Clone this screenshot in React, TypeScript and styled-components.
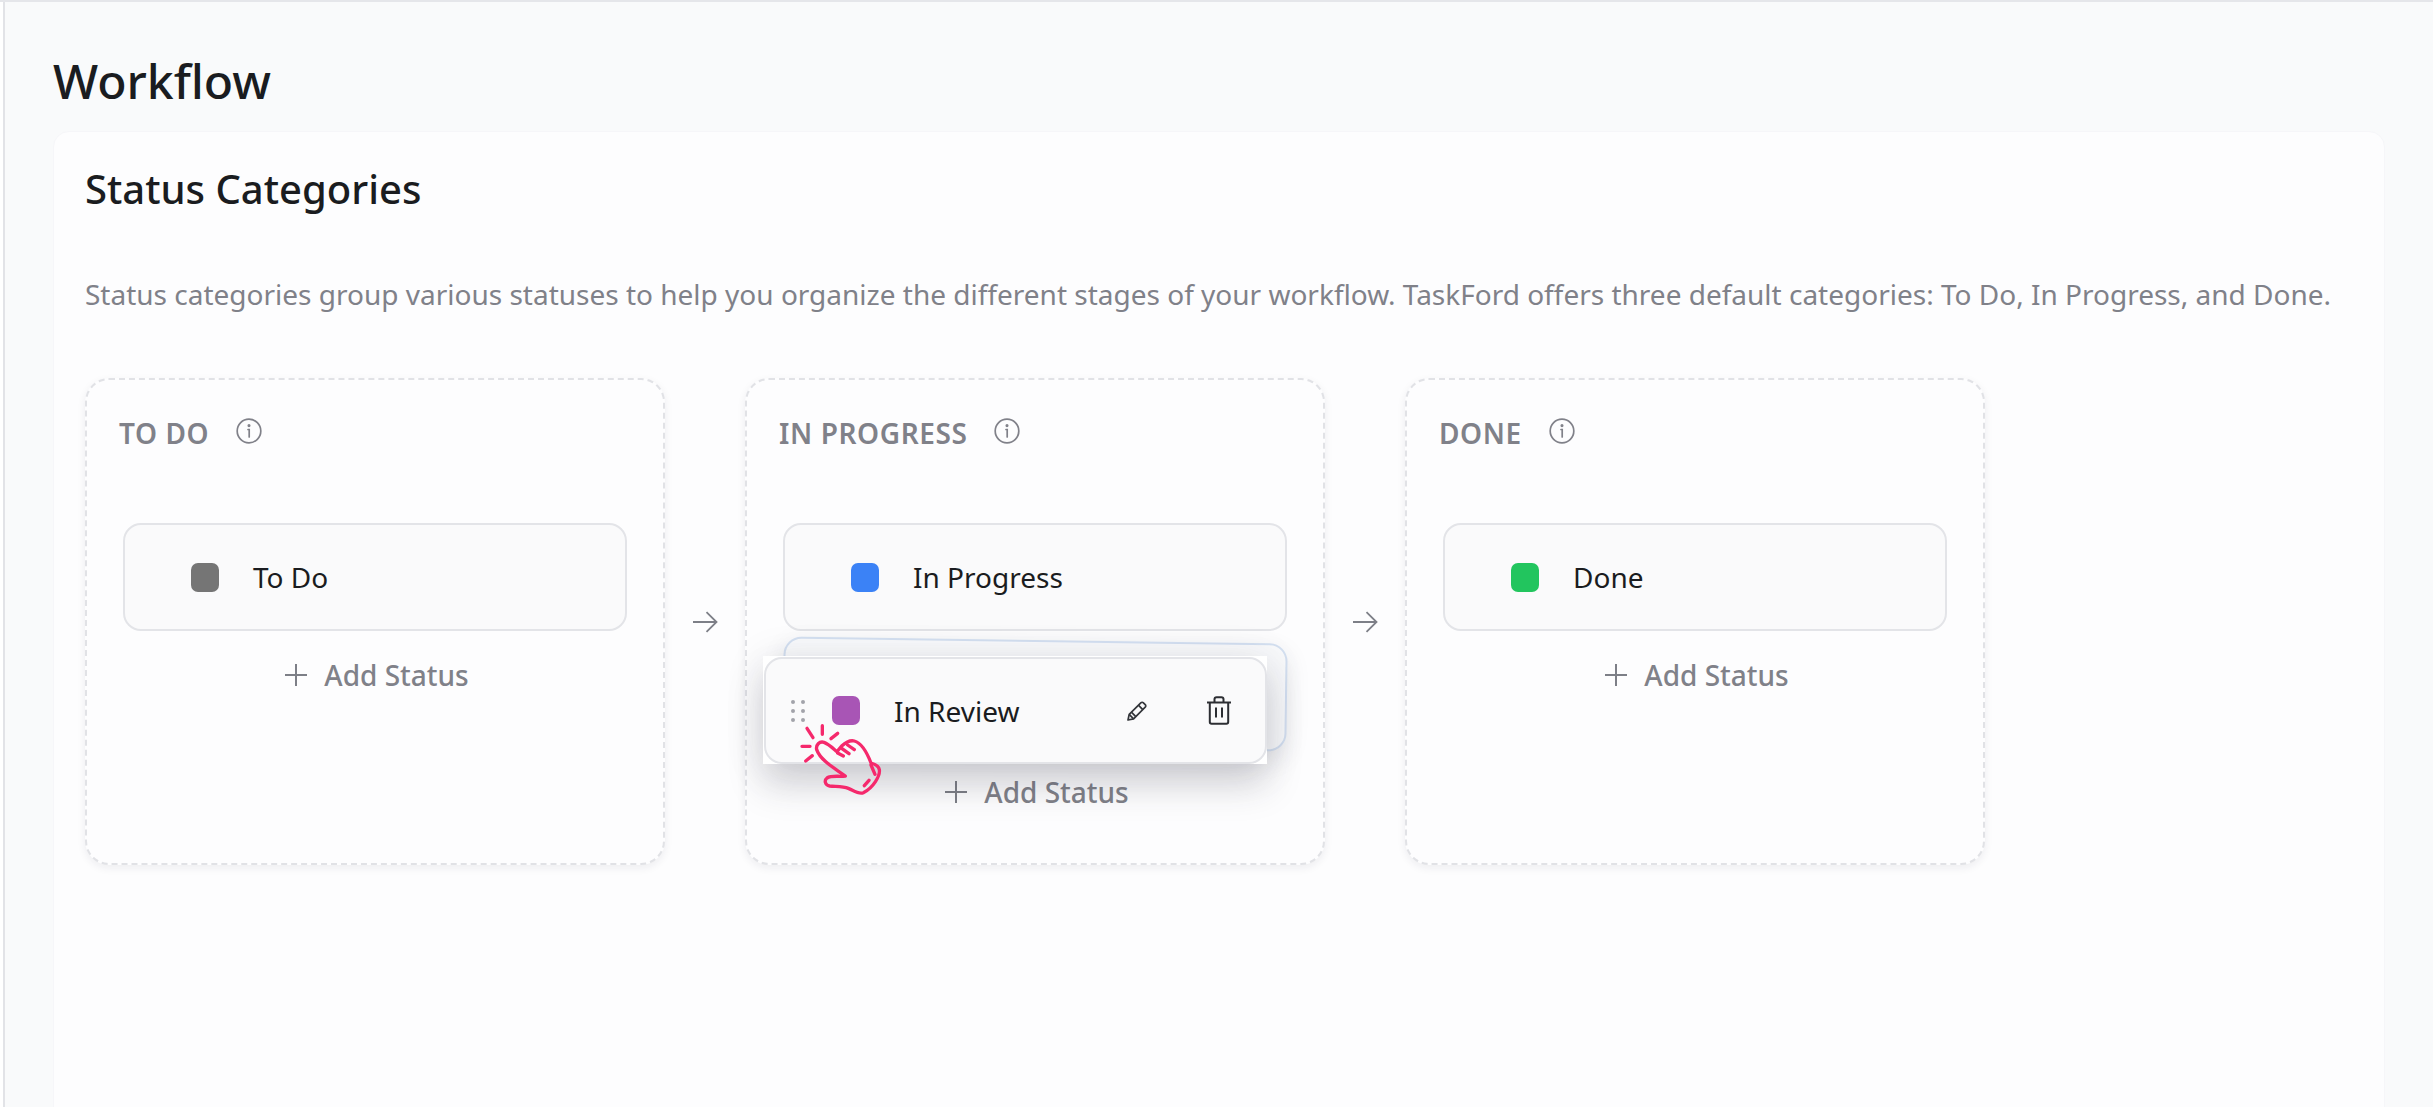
import React from "react";
import styled, { createGlobalStyle } from "styled-components";

const Global = createGlobalStyle`
  html, body { margin: 0; padding: 0; background: #ffffff; }
  body { font-family: "Noto Sans", "Open Sans", sans-serif; overflow: hidden; }
`;

const Page = styled.div`
  box-sizing: border-box;
  width: 2433px;
  height: 1107px;
  overflow: hidden;
  border-top: 2px solid #e5e6ea;
  padding-left: 3px;
`;

const Main = styled.main`
  box-sizing: border-box;
  height: 100%;
  border-left: 2px solid #e2e3e7;
  background: #f9fafb;
  padding: 47px 48px 0 48px;
`;

const Title = styled.h1`
  margin: 0 0 18px;
  font-size: 48px;
  line-height: 64px;
  font-weight: 500;
  color: #1a1c20;
`;

const Card = styled.section`
  box-sizing: border-box;
  height: 1000px;
  background: #fdfdfe;
  border: 1px solid #f6f6f9;
  border-radius: 16px;
  padding: 32px 31px 0;
`;

const CardTitle = styled.h2`
  margin: 0 0 60px;
  font-size: 40px;
  line-height: 50px;
  font-weight: 500;
  color: #1a1c20;
`;

const Description = styled.p`
  margin: 0 0 64px;
  font-size: 28px;
  line-height: 40px;
  color: #808189;
  white-space: nowrap;
`;

const Board = styled.div`
  display: flex;
  align-items: flex-start;
`;

const Column = styled.div`
  position: relative;
  box-sizing: border-box;
  flex: none;
  width: 580px;
  height: 487px;
  border: 2px dashed #e1e2e6;
  border-radius: 24px;
  background: #fdfdfe;
  box-shadow: 0 3px 8px rgba(30, 30, 50, 0.07);
  padding-top: 34px;
`;

const ColumnHead = styled.div`
  display: flex;
  align-items: center;
  gap: 27px;
  padding: 0 32px;
  height: 38px;
  margin-bottom: 71px;
`;

const ColumnName = styled.span`
  font-size: 28px;
  line-height: 38px;
  font-weight: 600;
  letter-spacing: 0.6px;
  color: #808189;
`;

const InfoIcon = styled.svg`
  flex: none;
  width: 26px;
  height: 26px;
  margin-bottom: 5px;
  color: #808189;
`;

const RowList = styled.div`
  display: flex;
  flex-direction: column;
  gap: 9px;
  padding: 0 36px;
`;

const Row = styled.div`
  box-sizing: border-box;
  display: flex;
  align-items: center;
  height: 108px;
  padding-left: 66px;
  gap: 34px;
  border: 2px solid #e3e4e8;
  border-radius: 18px;
  background: #fafafb;
`;

const GhostRow = styled.div`
  box-sizing: border-box;
  height: 108px;
  border: 2px solid #d3dff0;
  border-radius: 18px;
  background: #f8f9fb;
  transform: rotate(0.8deg);
  box-shadow: 0 8px 24px rgba(40, 50, 70, 0.1);
`;

const Swatch = styled.span<{ $color: string }>`
  flex: none;
  width: 28px;
  height: 29px;
  border-radius: 7px;
  background: ${(p) => p.$color};
`;

const RowLabel = styled.span`
  font-size: 28px;
  line-height: 38px;
  color: #1a1c20;
`;

const AddStatus = styled.div`
  display: flex;
  justify-content: center;
  align-items: center;
  gap: 16px;
  margin-top: 25px;
  height: 38px;
  padding-left: 3px;
  font-size: 28px;
  line-height: 38px;
  font-weight: 500;
  color: #808189;
`;

const PlusIcon = styled.svg`
  flex: none;
  width: 24px;
  height: 24px;
  color: #7d7f87;
`;

const Connector = styled.div`
  flex: none;
  width: 80px;
  height: 487px;
  display: flex;
  align-items: center;
  justify-content: center;
`;

const ArrowIcon = styled.svg`
  width: 26px;
  height: 22px;
  color: #7d7f87;
`;

const DragBacking = styled.div`
  position: absolute;
  left: 16px;
  top: 276px;
  width: 504px;
  height: 108px;
  background: #ffffff;
  box-shadow: 0 22px 36px rgba(40, 40, 60, 0.17), 0 4px 40px rgba(40, 40, 60, 0.1);
`;

const DragCard = styled.div`
  box-sizing: border-box;
  display: flex;
  align-items: center;
  height: 107px;
  width: 503px;
  margin: 1px 0 0 1px;
  padding-left: 25px;
  border: 2px solid #e3e4e8;
  border-radius: 18px;
  background: #fafafb;
`;

const Grip = styled.span`
  flex: none;
  display: grid;
  grid-template-columns: 4px 4px;
  column-gap: 6px;
  row-gap: 5px;
  margin-right: 27px;
`;

const GripDot = styled.i`
  width: 4px;
  height: 4px;
  border-radius: 50%;
  background: #a2a3aa;
`;

const DragLabel = styled(RowLabel)`
  margin-left: 34px;
  flex: 1;
`;

const Actions = styled.div`
  display: flex;
  align-items: center;
  gap: 58px;
  padding-right: 33px;
`;

const PencilIcon = styled.svg`
  width: 22px;
  height: 22px;
  color: #33353a;
`;

const TrashIcon = styled.svg`
  width: 26px;
  height: 29px;
  color: #2c2e33;
`;

const Pointer = styled.svg`
  position: absolute;
  left: 52px;
  top: 343px;
  width: 84px;
  height: 74px;
  color: #f5296c;
`;

const Info = () => (
  <InfoIcon viewBox="0 0 26 26" fill="none" stroke="currentColor" strokeWidth="1.7" strokeLinecap="round">
    <circle cx="13" cy="13" r="11.8" />
    <path d="M12 11.5h1.2V19" />
    <circle cx="13" cy="7.6" r="0.7" />
  </InfoIcon>
);

const Plus = () => (
  <PlusIcon viewBox="0 0 24 24" fill="none" stroke="currentColor" strokeWidth="2">
    <path d="M12 1v22M1 12h22" />
  </PlusIcon>
);

const Arrow = () => (
  <Connector>
    <ArrowIcon viewBox="0 0 26 22" fill="none" stroke="currentColor" strokeWidth="1.8">
      <path d="M1 11h23.5M14.5 1.2 24.5 11l-10 9.8" />
    </ArrowIcon>
  </Connector>
);

const Add = () => (
  <AddStatus>
    <Plus />
    Add Status
  </AddStatus>
);

export default function App() {
  return (
    <Page>
      <Global />
      <Main>
        <Title>Workflow</Title>
        <Card>
          <CardTitle>Status Categories</CardTitle>
          <Description>
            Status categories group various statuses to help you organize the different stages of your workflow. TaskFord offers three default categories: To Do, In Progress, and Done.
          </Description>
          <Board>
            <Column>
              <ColumnHead>
                <ColumnName>TO DO</ColumnName>
                <Info />
              </ColumnHead>
              <RowList>
                <Row>
                  <Swatch $color="#757575" />
                  <RowLabel>To Do</RowLabel>
                </Row>
              </RowList>
              <Add />
            </Column>
            <Arrow />
            <Column>
              <ColumnHead>
                <ColumnName>IN PROGRESS</ColumnName>
                <Info />
              </ColumnHead>
              <RowList>
                <Row>
                  <Swatch $color="#3b82f6" />
                  <RowLabel>In Progress</RowLabel>
                </Row>
                <GhostRow />
              </RowList>
              <Add />
              <DragBacking>
                <DragCard>
                  <Grip>
                    {Array.from({ length: 6 }).map((_, i) => (
                      <GripDot key={i} />
                    ))}
                  </Grip>
                  <Swatch $color="#a855b5" />
                  <DragLabel>In Review</DragLabel>
                  <Actions>
                    <PencilIcon viewBox="0 0 22 22" fill="none" stroke="currentColor" strokeWidth="1.7" strokeLinejoin="round">
                      <path d="M2 20l1.2-5.6L14.8 2.8a1.8 1.8 0 0 1 2.6 0l1.8 1.8a1.8 1.8 0 0 1 0 2.6L7.6 18.8z" />
                      <path d="M3.2 14.4l4.4 4.4M12.4 5.2l4.4 4.4M5.4 12.2l4.4 4.4" />
                    </PencilIcon>
                    <TrashIcon viewBox="0 0 26 29" fill="none" stroke="currentColor" strokeWidth="2" strokeLinejoin="round">
                      <path d="M1 6.5h24M8.5 6.5V3.2C8.5 2 9.5 1.2 10.6 1.2h4.8c1.1 0 2.1.8 2.1 2v3.3" />
                      <path d="M3.8 6.5V26c0 1 .8 1.8 1.8 1.8h14.8c1 0 1.8-.8 1.8-1.8V6.5" />
                      <path d="M10 11.5v10M16 11.5v10" />
                    </TrashIcon>
                  </Actions>
                </DragCard>
              </DragBacking>
              <Pointer viewBox="176 250 252 222" fill="none" stroke="currentColor" strokeWidth="10" strokeLinecap="round" strokeLinejoin="round">
                <path d="M200 266l18 28M246 258v26M272 297l20-16M185 320h24M196 364l20-16" />
                <path d="M229 330c-3-14 8-26 22-22 14 5 27 18 39 28l14-17c10-9 26-18 38-15 22 6 40 40 50 66 10 3 23 9 25 20 3 18-18 54-48 69-14 6-30-7-45-13-16-6-37-5-56-7-14-2-17-17-8-24 14-9 36-3 55-6-28-21-74-45-86-79z" />
                <path d="M304 326l22 16M292 340l17 9M322 316l20 14M372 438l14-16M392 376l12 28" />
              </Pointer>
            </Column>
            <Arrow />
            <Column>
              <ColumnHead>
                <ColumnName>DONE</ColumnName>
                <Info />
              </ColumnHead>
              <RowList>
                <Row>
                  <Swatch $color="#22c55e" />
                  <RowLabel>Done</RowLabel>
                </Row>
              </RowList>
              <Add />
            </Column>
          </Board>
        </Card>
      </Main>
    </Page>
  );
}
